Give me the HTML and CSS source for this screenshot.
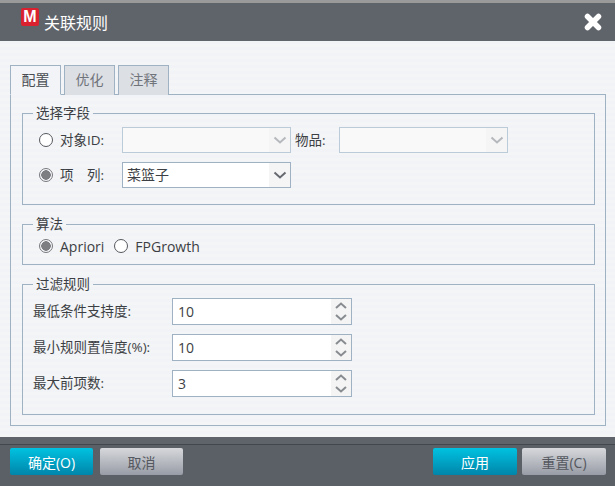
FILE: index.html
```html
<!DOCTYPE html>
<html lang="zh-CN">
<head>
    <meta charset="UTF-8">
    <meta name="viewport" content="width=device-width, initial-scale=1.0">
    <title>关联规则</title>
    <link rel="stylesheet" href="styles.css">
</head>
<body>

    <div class="dialog">
        <div class="title-bar">
            <span class="logo">M</span>
            <h2>关联规则</h2>
            <svg class="close" width="18" height="18" viewBox="0 0 18 18">
                <path d="M3.5 3.5 L14.5 14.5 M14.5 3.5 L3.5 14.5" stroke="#fff" stroke-width="5.5" stroke-linecap="round"/>
            </svg>
        </div>

        <div class="content">
            <div class="tabs">
                <div class="tab active">配置</div>
                <div class="tab">优化</div>
                <div class="tab">注释</div>
            </div>

            <div class="panel">
                <fieldset class="group-fields">
                    <legend>选择字段</legend>
                    <div class="row">
                        <span class="radio"></span>
                        <span class="field-label">对象ID:</span>
                        <div class="combo disabled">
                            <span class="combo-value"></span>
                            <span class="combo-arrow">
                                <svg width="14" height="8" viewBox="0 0 14 8"><path d="M1.5 1.5 L7 6.5 L12.5 1.5" fill="none" stroke="#b5b8bc" stroke-width="2"/></svg>
                            </span>
                        </div>
                        <span class="item-label">物品:</span>
                        <div class="combo disabled">
                            <span class="combo-value"></span>
                            <span class="combo-arrow">
                                <svg width="14" height="8" viewBox="0 0 14 8"><path d="M1.5 1.5 L7 6.5 L12.5 1.5" fill="none" stroke="#b5b8bc" stroke-width="2"/></svg>
                            </span>
                        </div>
                    </div>
                    <div class="row">
                        <span class="radio checked"></span>
                        <span class="field-label">项　列:</span>
                        <div class="combo">
                            <span class="combo-value">菜篮子</span>
                            <span class="combo-arrow">
                                <svg width="14" height="8" viewBox="0 0 14 8"><path d="M1.5 1.5 L7 6.5 L12.5 1.5" fill="none" stroke="#666a70" stroke-width="2"/></svg>
                            </span>
                        </div>
                    </div>
                </fieldset>

                <fieldset class="group-algo">
                    <legend>算法</legend>
                    <div class="algo-row">
                        <span class="radio checked"></span>
                        <span class="algo-name">Apriori</span>
                        <span class="radio"></span>
                        <span class="algo-name">FPGrowth</span>
                    </div>
                </fieldset>

                <fieldset class="group-filter">
                    <legend>过滤规则</legend>
                    <div class="spin-row">
                        <span class="spin-label">最低条件支持度:</span>
                        <div class="spinner">
                            <span class="spin-value">10</span>
                            <span class="spin-btns">
                                <svg width="12" height="7" viewBox="0 0 12 7"><path d="M1 6 L6 1.5 L11 6" fill="none" stroke="#888c90" stroke-width="2"/></svg>
                                <svg width="12" height="7" viewBox="0 0 12 7"><path d="M1 1 L6 5.5 L11 1" fill="none" stroke="#888c90" stroke-width="2"/></svg>
                            </span>
                        </div>
                    </div>
                    <div class="spin-row">
                        <span class="spin-label">最小规则置信度(%):</span>
                        <div class="spinner">
                            <span class="spin-value">10</span>
                            <span class="spin-btns">
                                <svg width="12" height="7" viewBox="0 0 12 7"><path d="M1 6 L6 1.5 L11 6" fill="none" stroke="#888c90" stroke-width="2"/></svg>
                                <svg width="12" height="7" viewBox="0 0 12 7"><path d="M1 1 L6 5.5 L11 1" fill="none" stroke="#888c90" stroke-width="2"/></svg>
                            </span>
                        </div>
                    </div>
                    <div class="spin-row">
                        <span class="spin-label">最大前项数:</span>
                        <div class="spinner">
                            <span class="spin-value">3</span>
                            <span class="spin-btns">
                                <svg width="12" height="7" viewBox="0 0 12 7"><path d="M1 6 L6 1.5 L11 6" fill="none" stroke="#888c90" stroke-width="2"/></svg>
                                <svg width="12" height="7" viewBox="0 0 12 7"><path d="M1 1 L6 5.5 L11 1" fill="none" stroke="#888c90" stroke-width="2"/></svg>
                            </span>
                        </div>
                    </div>
                </fieldset>
            </div>
        </div>

        <div class="footer">
            <button class="btn primary" type="button">确定(O)</button>
            <button class="btn" type="button">取消</button>
            <span class="spacer"></span>
            <button class="btn wide primary" type="button">应用</button>
            <button class="btn wide" type="button">重置(C)</button>
        </div>
    </div>

</body>
</html>
```

FILE: styles.css
```css
* {
    box-sizing: border-box;
}
html, body {
    margin: 0;
    height: 100%;
    overflow: hidden;
}
body {
    font-family: "Open Sans", "Noto Sans CJK SC", sans-serif;
    font-size: 13.5px;
    color: #3c3f44;
}
.dialog {
    height: 486px;
    display: flex;
    flex-direction: column;
    border-top: 3px solid #9a9a9a;
}

/* title bar */
.title-bar {
    height: 38px;
    flex: none;
    background-color: #5f646b;
    display: flex;
    align-items: center;
    padding-left: 21px;
    padding-right: 13px;
}
.logo {
    width: 18px;
    height: 18px;
    margin-top: -10px;
    background-color: #d9212f;
    border-radius: 2px;
    color: #fff;
    font-family: "Liberation Sans", sans-serif;
    font-size: 16px;
    font-weight: bold;
    line-height: 18px;
    text-align: center;
}
.title-bar h2 {
    margin: 0 0 0 5px;
    flex: 1;
    font-size: 16px;
    font-weight: normal;
    color: #fff;
}

/* tabs */
.content {
    flex: 1;
    padding: 24px 9px 11px 10px;
    background: repeating-linear-gradient(180deg, #f2f3f6 0, #f2f3f6 3px, #f4f5f7 3px, #f4f5f7 6px);
}
.tabs {
    display: flex;
    gap: 3px;
    height: 30px;
    margin-bottom: -1px;
    position: relative;
}
.tab {
    width: 51px;
    height: 30px;
    border: 1px solid #9fb2c3;
    border-bottom: none;
    background-color: #dcdfe4;
    color: #70747b;
    font-size: 14px;
    line-height: 28px;
    text-align: center;
}
.tab.active {
    background-color: #f3f4f7;
    color: #4a4d53;
    border-bottom: 1px solid #f3f4f7;
}
.panel {
    height: 332px;
    border: 1px solid #9fb2c3;
    padding: 9px 10px 0 11px;
}

/* groups */
fieldset {
    margin: 0;
    padding: 0;
    border: 1px solid #9fb2c3;
}
legend {
    margin-left: 10px;
    padding: 0 3px;
    line-height: 18px;
}
.group-fields {
    height: 101px;
    padding-top: 5px;
}
.group-algo {
    height: 50px;
    margin-top: 10px;
    padding-top: 2px;
}
.group-filter {
    height: 140px;
    margin-top: 10px;
    padding-top: 5px;
}
.row {
    display: flex;
    align-items: center;
    height: 26px;
    margin-bottom: 9px;
    margin-left: 16px;
}
.field-label {
    width: 69px;
    padding-left: 7px;
    margin-top: -2px;
}
.item-label {
    width: 48px;
    padding-left: 4px;
    margin-top: -2px;
}
.radio {
    width: 14px;
    height: 14px;
    flex: none;
    border: 1px solid #55585e;
    border-radius: 50%;
    background-color: #fff;
}
.radio.checked {
    border-color: #77797e;
    background: radial-gradient(circle, #7c7e82 0, #7c7e82 4.5px, #f4f5f7 5px);
}

/* combos */
.combo {
    width: 169px;
    height: 26px;
    display: flex;
    border: 1px solid #9fb2c3;
    background-color: #fff;
    font-size: 14px;
}
.combo.disabled {
    border-color: #bccbd8;
    background-color: #f9f9fa;
}
.combo-value {
    flex: 1;
    padding-left: 4px;
    line-height: 23px;
}
.combo-arrow {
    width: 21px;
    display: flex;
    align-items: center;
    justify-content: center;
    background-color: #f5f5f5;
}
.algo-row {
    display: flex;
    align-items: center;
    height: 22px;
    margin-left: 16px;
    font-size: 14px;
}
.algo-name {
    margin-left: 7px;
    margin-right: 10px;
}

/* spinners */
.spin-row {
    display: flex;
    align-items: center;
    height: 27px;
    margin-bottom: 9px;
    margin-left: 10px;
}
.spin-label {
    width: 139px;
    margin-top: -3px;
}
.spinner {
    width: 180px;
    height: 27px;
    display: flex;
    border: 1px solid #9fb2c3;
    background-color: #fff;
}
.spin-value {
    flex: 1;
    padding-left: 5px;
    font-size: 14px;
    line-height: 25px;
}
.spin-btns {
    width: 20px;
    display: flex;
    flex-direction: column;
    align-items: center;
    justify-content: center;
    gap: 5px;
    background-color: #f4f4f4;
}

/* footer */
.footer {
    flex: 1;
    display: flex;
    align-items: flex-start;
    gap: 7px;
    padding: 4px 9px 0 10px;
    background-color: #5b6067;
    border-top: 7px solid #5f646b;
    box-shadow: inset 0 1px 0 #43474d;
}
.spacer {
    flex: 1;
}
.btn {
    width: 83px;
    height: 27px;
    padding: 0;
    border: none;
    border-radius: 2px;
    font-family: inherit;
    font-size: 14px;
    color: #55585f;
    background: linear-gradient(180deg, #d6d8db, #989ca6);
}
.btn.wide {
    width: 84px;
    margin-left: -2px;
}
.btn.primary {
    color: #fff;
    background: linear-gradient(180deg, #00c2e0, #0085aa);
}
```
